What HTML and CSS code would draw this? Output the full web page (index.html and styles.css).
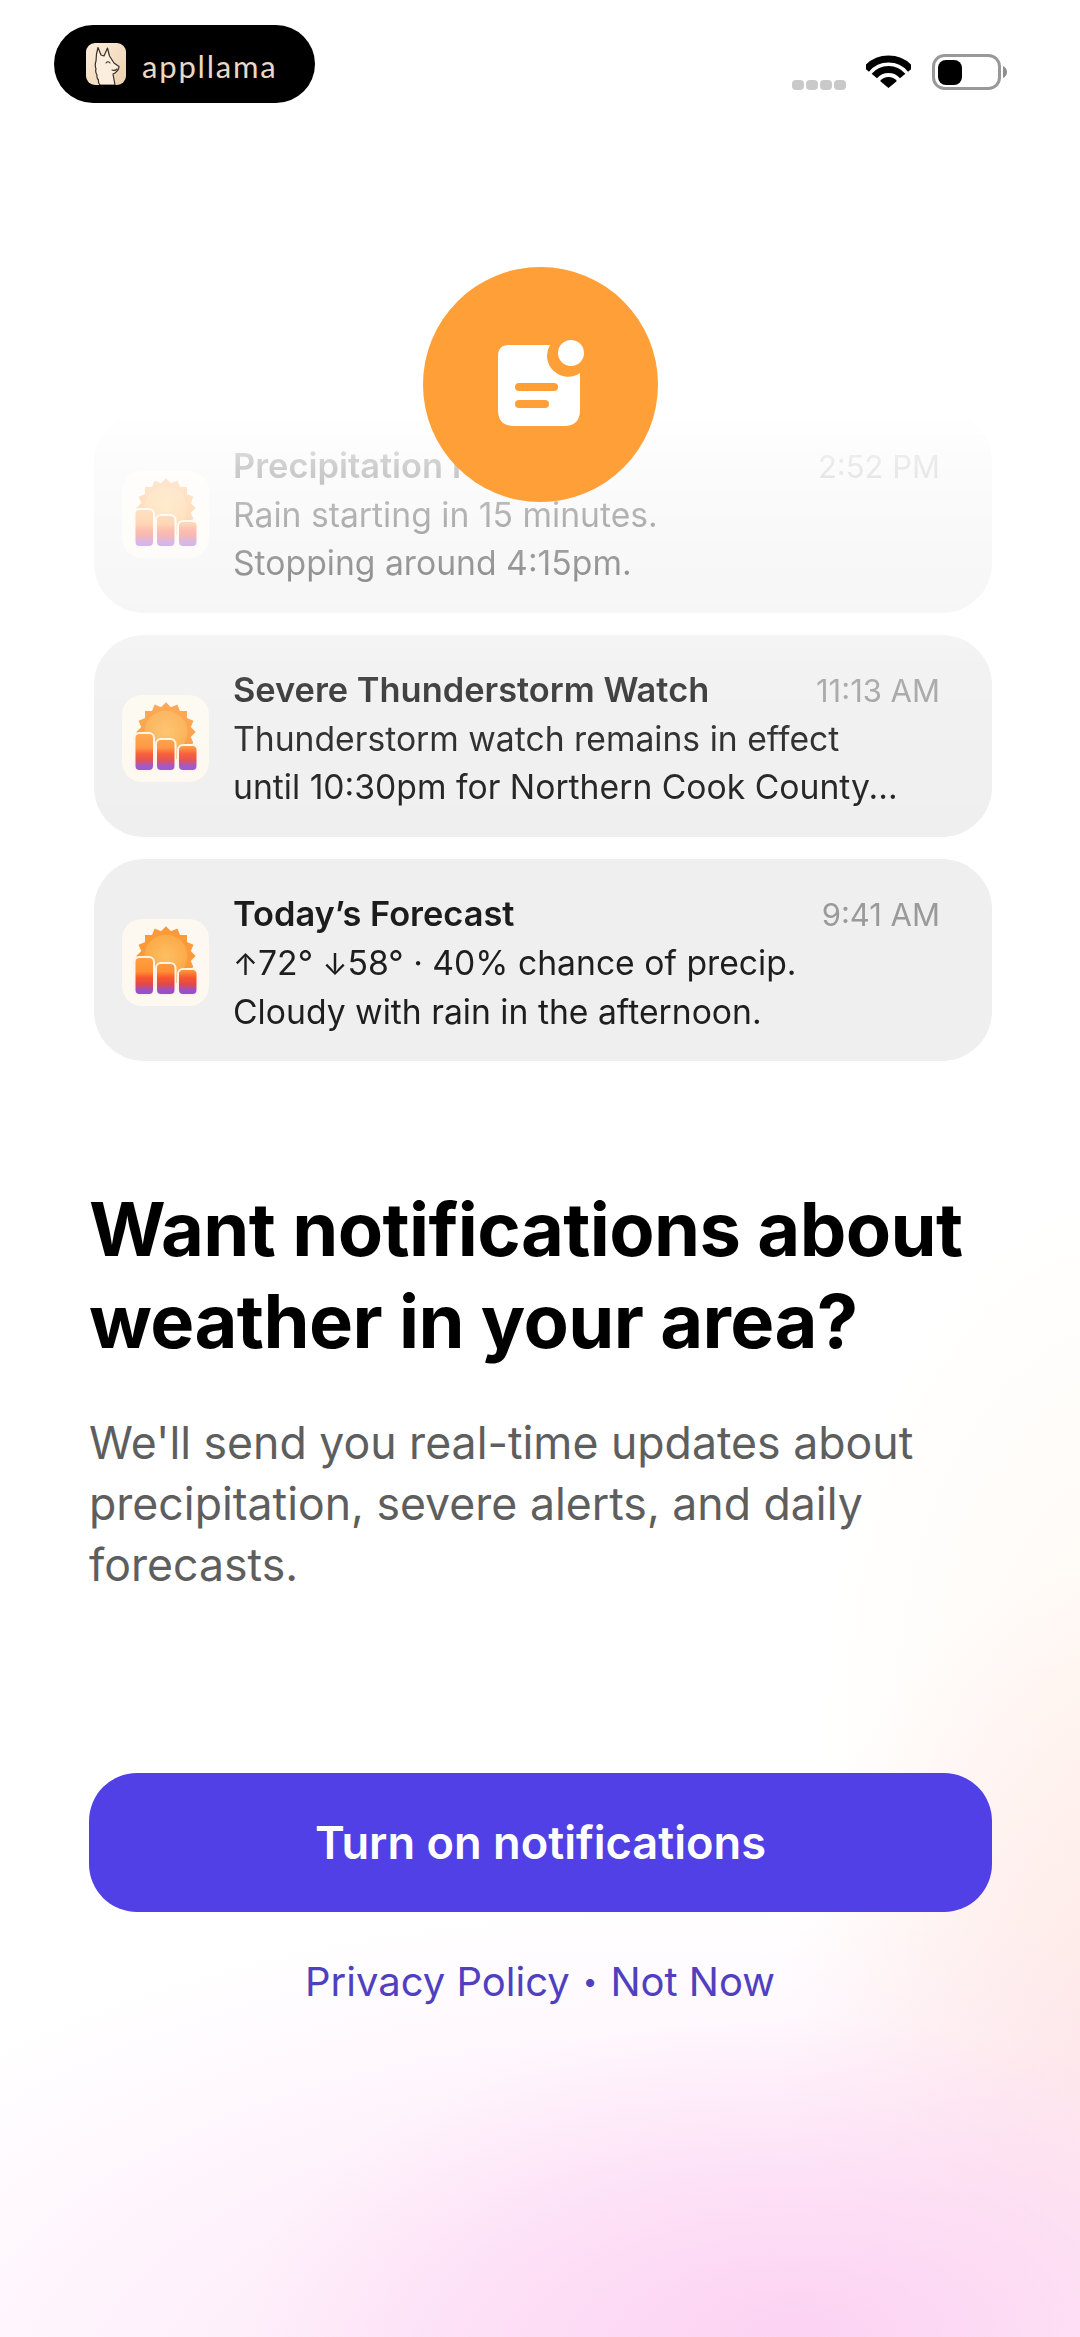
FILE: index.html
```html
<!DOCTYPE html>
<html lang="en">
<head>
  <meta charset="UTF-8">
  <title>Notifications</title>
  <link rel="stylesheet" href="styles.css">
</head>
<body>
  <svg class="defs" width="0" height="0">
    <defs>
      <linearGradient id="barFill" gradientUnits="userSpaceOnUse" x1="0" y1="38" x2="0" y2="76">
        <stop offset="0" stop-color="#ffa23c"/>
        <stop offset="0.38" stop-color="#ff8f36"/>
        <stop offset="0.55" stop-color="#f8562c"/>
        <stop offset="0.72" stop-color="#e0484a"/>
        <stop offset="0.88" stop-color="#9a50cc"/>
        <stop offset="1" stop-color="#9050d0"/>
      </linearGradient>
      <radialGradient id="sunFill">
        <stop offset="0" stop-color="#fdbf62"/>
        <stop offset="1" stop-color="#fcaa48"/>
      </radialGradient>
      <linearGradient id="llamaTile" x1="0" y1="0" x2="1" y2="1">
        <stop offset="0" stop-color="#fbeedd"/>
        <stop offset="1" stop-color="#edd0ae"/>
      </linearGradient>
      <symbol id="weather" viewBox="0 0 87 87">
        <rect width="87" height="87" rx="20" fill="#fdf9f0"/>
        <g fill="#fb9a3a">
          <rect x="23" y="16" width="42" height="42"/>
          <rect x="23" y="16" width="42" height="42" transform="rotate(22.5 44 37)"/>
          <rect x="23" y="16" width="42" height="42" transform="rotate(45 44 37)"/>
          <rect x="23" y="16" width="42" height="42" transform="rotate(67.5 44 37)"/>
        </g>
        <circle cx="44" cy="37" r="21.500" fill="url(#sunFill)"/>
        <g fill="url(#barFill)" stroke="#fdf3ea" stroke-width="2">
          <rect x="12.500" y="38" width="19.500" height="38" rx="5"/>
          <rect x="34" y="44" width="19.500" height="32" rx="5"/>
          <rect x="56" y="50" width="19.500" height="26" rx="5"/>
        </g>
      </symbol>
    </defs>
  </svg>

  <div class="page">
    <header class="topbar">
      <div class="brand">
        <svg class="brand-icon" viewBox="0 0 40 42">
          <rect width="40" height="42" rx="9" fill="url(#llamaTile)"/>
          <path d="M14 42 Q12 40 12.500 37 Q10.500 35 11 32 Q9 29 10 26 Q8.500 22 10 18 L10.500 11 L12 4.500 L15 12 L18 13 L21.500 5 L23.500 13 L28 20 L33 23.500 Q33 27 29 30 L27 31 L29 42 Z" fill="#fbeedd" stroke="#3a3027" stroke-width="1.200" stroke-linejoin="round"/>
          <path d="M20 20 Q22 17.500 24 20M26 27 Q29 28 31 26" fill="none" stroke="#3a3027" stroke-width="1.100" stroke-linecap="round"/>
        </svg>
        <span class="brand-name">appllama</span>
      </div>
      <div class="status">
        <div class="dots"><span></span><span></span><span></span><span></span></div>
        <svg class="wifi" viewBox="0 0 45 33">
          <path d="M.3 14.400A29 29 0 0 1 44.700 14.400M8.300 21.100A18.500 18.500 0 0 1 36.700 21.100" fill="none" stroke="#000" stroke-width="7"/>
          <path d="M22.500 33L14.100 25.900A11 11 0 0 1 30.900 25.900Z" fill="#000"/>
        </svg>
        <svg class="battery" viewBox="0 0 76 36">
          <rect x="1.500" y="1.500" width="66" height="33" rx="11" fill="#fff" stroke="#999" stroke-width="3"/>
          <rect x="6" y="6" width="24" height="25" rx="8" fill="#000"/>
          <path d="M71 12Q75 14 75 18Q75 22 71 24Z" fill="#8f8f8f"/>
        </svg>
      </div>
    </header>

    <div class="badge">
      <svg class="badge-icon" viewBox="0 0 96 96">
        <path d="M15 10H56A21 21 0 0 0 86 38V75Q86 91 70 91H20Q4 91 4 75V21Q4 10 15 10Z" fill="#fff"/>
        <circle cx="77" cy="18" r="13" fill="#fff"/>
        <rect x="21" y="48" width="43" height="8" rx="4" fill="#ff9f38"/>
        <rect x="21" y="65" width="34" height="8" rx="4" fill="#ff9f38"/>
      </svg>
    </div>

    <section class="stack">
      <div class="card">
        <svg class="card-icon"><use href="#weather"/></svg>
        <div class="card-text">
          <div class="card-head"><span class="card-title">Precipitation Nearby</span><span class="card-time">2:52 PM</span></div>
          <p>Rain starting in 15 minutes.</p>
          <p>Stopping around 4:15pm.</p>
        </div>
      </div>
      <div class="card">
        <svg class="card-icon"><use href="#weather"/></svg>
        <div class="card-text">
          <div class="card-head"><span class="card-title">Severe Thunderstorm Watch</span><span class="card-time">11:13 AM</span></div>
          <p>Thunderstorm watch remains in effect</p>
          <p>until 10:30pm for Northern Cook County...</p>
        </div>
      </div>
      <div class="card">
        <svg class="card-icon"><use href="#weather"/></svg>
        <div class="card-text">
          <div class="card-head"><span class="card-title">Today’s Forecast</span><span class="card-time">9:41 AM</span></div>
          <p><span class="arrow">↑</span>72° <span class="arrow">↓</span>58° · 40% chance of precip.</p>
          <p>Cloudy with rain in the afternoon.</p>
        </div>
      </div>
    </section>

    <section class="copy">
      <h1>Want notifications about weather in your area?</h1>
      <p>We'll send you real-time updates about precipitation, severe alerts, and daily forecasts.</p>
    </section>

    <button class="cta">Turn on notifications</button>
    <div class="links"><a>Privacy Policy</a><span class="sep">•</span><a>Not Now</a></div>
  </div>
</body>
</html>
```

FILE: styles.css
```css
* {
  box-sizing: border-box;
}
html, body {
  margin: 0;
  padding: 0;
}
body {
  font-family: Inter, "Liberation Sans", sans-serif;
  background: #fff;
  color: #000;
}
.defs {
  display: block;
  height: 0;
}
.page {
  width: 1080px;
  height: 2337px;
  overflow: hidden;
  display: flex;
  flex-direction: column;
  background:
    radial-gradient(ellipse 560px 320px at 800px 2337px, rgba(252, 208, 242, 0.9), rgba(252, 208, 242, 0)),
    radial-gradient(ellipse 1000px 520px at 680px 2420px, rgba(252, 220, 245, 0.85), rgba(252, 220, 245, 0)),
    radial-gradient(ellipse 340px 480px at 1120px 2040px, rgba(253, 226, 226, 0.8), rgba(253, 226, 226, 0)),
    radial-gradient(ellipse 320px 560px at 1130px 1740px, rgba(255, 240, 226, 0.45), rgba(255, 240, 226, 0)),
    #fff;
}

/* top bar */
.topbar {
  display: flex;
  justify-content: space-between;
  align-items: flex-start;
  padding: 25px 72px 0 54px;
}
.brand {
  width: 261px;
  height: 78px;
  border-radius: 39px;
  background: #000;
  display: flex;
  align-items: center;
  padding-left: 32px;
  gap: 16px;
}
.brand-icon {
  width: 40px;
  height: 42px;
}
.brand-name {
  font-family: Lato, sans-serif;
  font-weight: 400;
  font-size: 31px;
  letter-spacing: 1.800px;
  color: #ead8c4;
  margin-top: 4px;
}
.status {
  display: flex;
  align-items: center;
  margin-top: 28px;
}
.dots {
  display: flex;
  gap: 2px;
  margin-top: 27px;
  margin-right: 20px;
}
.dots span {
  width: 12px;
  height: 10px;
  border-radius: 4px;
  background: #c9c9c9;
}
.wifi {
  width: 45px;
  height: 33px;
  margin-right: 21px;
}
.battery {
  width: 76px;
  height: 36px;
}

/* orange circle */
.badge {
  width: 235px;
  height: 235px;
  margin: 164px auto 0;
  border-radius: 50%;
  background: #ff9f38;
  position: relative;
  z-index: 1;
  display: flex;
  align-items: center;
  justify-content: center;
}
.badge-icon {
  width: 96px;
  height: 96px;
  margin-left: 4px;
  margin-top: -3px;
}

/* notification cards */
.stack {
  margin: -91px 88px 0 94px;
  display: flex;
  flex-direction: column;
  gap: 22px;
  -webkit-mask-image: linear-gradient(to bottom, rgba(0,0,0,0) 0, rgba(0,0,0,0.2) 50px, rgba(0,0,0,0.33) 100px, rgba(0,0,0,0.5) 170px, rgba(0,0,0,0.55) 205px, rgba(0,0,0,0.78) 250px, rgba(0,0,0,0.93) 340px, #000 430px);
  mask-image: linear-gradient(to bottom, rgba(0,0,0,0) 0, rgba(0,0,0,0.2) 50px, rgba(0,0,0,0.33) 100px, rgba(0,0,0,0.5) 170px, rgba(0,0,0,0.55) 205px, rgba(0,0,0,0.78) 250px, rgba(0,0,0,0.93) 340px, #000 430px);
}
.card {
  height: 202px;
  border-radius: 50px;
  background: #efefef;
  display: flex;
  align-items: center;
  padding: 0 52px 0 28px;
}
.card-icon {
  width: 87px;
  height: 87px;
  flex: none;
  margin: 4px 24px 0 0;
}
.card-text {
  flex: 1;
  min-width: 0;
  padding-top: 5px;
}
.card-head {
  display: flex;
  justify-content: space-between;
  align-items: baseline;
}
.card-title {
  font-size: 34.400px;
  font-weight: 600;
  line-height: 48px;
  color: #1c1c1c;
}
.card-time {
  font-size: 31px;
  line-height: 48px;
  color: #9a9a9a;
}
.card-text p {
  margin: 0;
  font-size: 33.700px;
  line-height: 48px;
  color: #1e1e1e;
}
.card-text .arrow {
  font-size: 30px;
}

/* copy */
.copy {
  padding: 0 89px;
  margin-top: 122px;
}
.copy h1 {
  margin: 0;
  font-size: 74px;
  font-weight: 700;
  line-height: 92px;
  letter-spacing: -0.600px;
}
.copy p {
  margin: 46px 0 0;
  font-size: 44.600px;
  line-height: 61px;
  color: #5e5e5e;
}

/* actions */
.cta {
  display: block;
  width: 903px;
  height: 139px;
  margin: 177px 0 0 89px;
  border: none;
  border-radius: 48px;
  background: #5040e6;
  color: #fff;
  font-family: inherit;
  font-size: 45.200px;
  font-weight: 600;
}
.links {
  display: flex;
  justify-content: center;
  align-items: center;
  gap: 13px;
  margin-top: 43px;
  font-size: 40px;
  line-height: 54px;
  color: #4f40c0;
}
.sep {
  font-size: 26px;
}
```
